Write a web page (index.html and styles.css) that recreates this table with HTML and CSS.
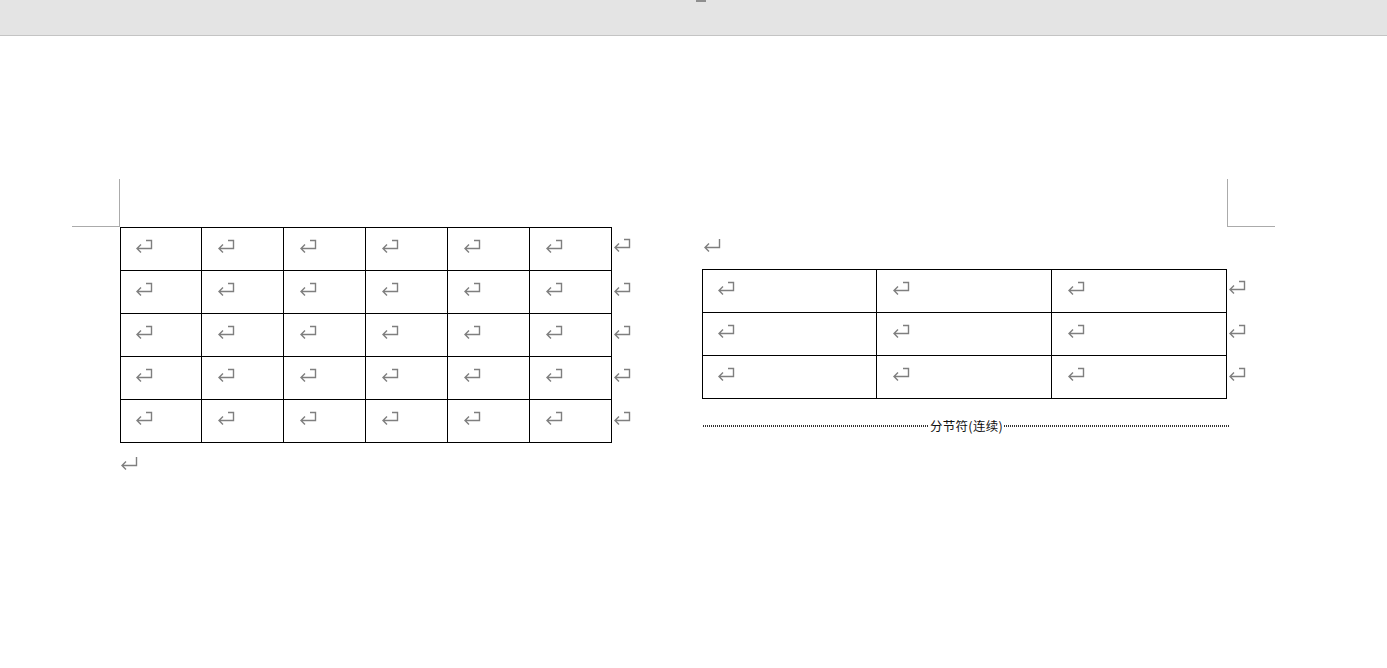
FILE: index.html
```html
<!DOCTYPE html>
<html lang="zh">
<head>
<meta charset="utf-8">
<title>Document</title>
<link rel="stylesheet" href="styles.css">
</head>
<body>
<svg class="defs" width="0" height="0">
  <defs>
    <symbol id="cellmark" viewBox="0 0 18 16">
      <path d="M11 2.5H16.5V10.5H2M6 6.5L2 10.5L6 14.5" fill="none" stroke="#7f7f7f" stroke-width="1.4"/>
    </symbol>
    <symbol id="paramark" viewBox="0 0 18 16">
      <path d="M16.5 2V10.5H2M6 6.5L2 10.5L6 14.5" fill="none" stroke="#7f7f7f" stroke-width="1.4"/>
    </symbol>
  </defs>
</svg>
<div class="topbar"><span class="tick"></span></div>
<div class="main">
  <div class="page page-left">
    <div class="crop crop-left"></div>
    <div class="content content-left">
      <div class="tbl tbl-left">
        <div class="row first">
          <div class="cell"><svg class="m"><use href="#cellmark"/></svg></div>
          <div class="cell"><svg class="m"><use href="#cellmark"/></svg></div>
          <div class="cell"><svg class="m"><use href="#cellmark"/></svg></div>
          <div class="cell"><svg class="m"><use href="#cellmark"/></svg></div>
          <div class="cell"><svg class="m"><use href="#cellmark"/></svg></div>
          <div class="cell"><svg class="m"><use href="#cellmark"/></svg></div>
          <div class="eol"><svg class="m"><use href="#cellmark"/></svg></div>
        </div>
        <div class="row">
          <div class="cell"><svg class="m"><use href="#cellmark"/></svg></div>
          <div class="cell"><svg class="m"><use href="#cellmark"/></svg></div>
          <div class="cell"><svg class="m"><use href="#cellmark"/></svg></div>
          <div class="cell"><svg class="m"><use href="#cellmark"/></svg></div>
          <div class="cell"><svg class="m"><use href="#cellmark"/></svg></div>
          <div class="cell"><svg class="m"><use href="#cellmark"/></svg></div>
          <div class="eol"><svg class="m"><use href="#cellmark"/></svg></div>
        </div>
        <div class="row">
          <div class="cell"><svg class="m"><use href="#cellmark"/></svg></div>
          <div class="cell"><svg class="m"><use href="#cellmark"/></svg></div>
          <div class="cell"><svg class="m"><use href="#cellmark"/></svg></div>
          <div class="cell"><svg class="m"><use href="#cellmark"/></svg></div>
          <div class="cell"><svg class="m"><use href="#cellmark"/></svg></div>
          <div class="cell"><svg class="m"><use href="#cellmark"/></svg></div>
          <div class="eol"><svg class="m"><use href="#cellmark"/></svg></div>
        </div>
        <div class="row">
          <div class="cell"><svg class="m"><use href="#cellmark"/></svg></div>
          <div class="cell"><svg class="m"><use href="#cellmark"/></svg></div>
          <div class="cell"><svg class="m"><use href="#cellmark"/></svg></div>
          <div class="cell"><svg class="m"><use href="#cellmark"/></svg></div>
          <div class="cell"><svg class="m"><use href="#cellmark"/></svg></div>
          <div class="cell"><svg class="m"><use href="#cellmark"/></svg></div>
          <div class="eol"><svg class="m"><use href="#cellmark"/></svg></div>
        </div>
        <div class="row">
          <div class="cell"><svg class="m"><use href="#cellmark"/></svg></div>
          <div class="cell"><svg class="m"><use href="#cellmark"/></svg></div>
          <div class="cell"><svg class="m"><use href="#cellmark"/></svg></div>
          <div class="cell"><svg class="m"><use href="#cellmark"/></svg></div>
          <div class="cell"><svg class="m"><use href="#cellmark"/></svg></div>
          <div class="cell"><svg class="m"><use href="#cellmark"/></svg></div>
          <div class="eol"><svg class="m"><use href="#cellmark"/></svg></div>
        </div>
      </div>
      <div class="para para-after"><svg class="m"><use href="#paramark"/></svg></div>
    </div>
  </div>
  <div class="page page-right">
    <div class="content content-right">
      <div class="para para-before"><svg class="m"><use href="#paramark"/></svg></div>
      <div class="tbl tbl-right">
        <div class="row first">
          <div class="cell"><svg class="m"><use href="#cellmark"/></svg></div>
          <div class="cell"><svg class="m"><use href="#cellmark"/></svg></div>
          <div class="cell"><svg class="m"><use href="#cellmark"/></svg></div>
          <div class="eol"><svg class="m"><use href="#cellmark"/></svg></div>
        </div>
        <div class="row">
          <div class="cell"><svg class="m"><use href="#cellmark"/></svg></div>
          <div class="cell"><svg class="m"><use href="#cellmark"/></svg></div>
          <div class="cell"><svg class="m"><use href="#cellmark"/></svg></div>
          <div class="eol"><svg class="m"><use href="#cellmark"/></svg></div>
        </div>
        <div class="row">
          <div class="cell"><svg class="m"><use href="#cellmark"/></svg></div>
          <div class="cell"><svg class="m"><use href="#cellmark"/></svg></div>
          <div class="cell"><svg class="m"><use href="#cellmark"/></svg></div>
          <div class="eol"><svg class="m"><use href="#cellmark"/></svg></div>
        </div>
      </div>
      <div class="section-break">
        <span class="dots"></span>
        <span class="sb-label">分节符(连续)</span>
        <span class="dots"></span>
      </div>
    </div>
    <div class="crop crop-right"></div>
  </div>
</div>
</body>
</html>
```

FILE: styles.css
```css
* {
  box-sizing: border-box;
}

html, body {
  margin: 0;
  padding: 0;
  width: 1387px;
  height: 668px;
  overflow: hidden;
  background: #ffffff;
  font-family: "Noto Sans CJK SC", "Noto Sans", sans-serif;
}

.defs {
  position: absolute;
  width: 0;
  height: 0;
}

.topbar {
  height: 36px;
  background: #e4e4e4;
  border-bottom: 1px solid #c4c4c4;
  display: flex;
  align-items: flex-start;
}

.tick {
  display: block;
  margin-left: 696px;
  width: 10px;
  height: 2px;
  background: #8e8e8e;
}

.main {
  display: flex;
  padding-top: 143px;
  padding-left: 72px;
}

.page {
  display: flex;
  align-items: flex-start;
}

.page-left {
  width: 630px;
}

.crop {
  width: 48px;
  height: 48px;
  flex: none;
  border-bottom: 1px solid #ababab;
}

.crop-left {
  border-right: 1px solid #ababab;
}

.crop-right {
  border-left: 1px solid #ababab;
}

.content {
  padding-top: 48px;
}

.content-left {
  width: 582px;
}

.content-right {
  width: 525px;
}

.m {
  display: block;
  width: 18px;
  height: 16px;
}

.row {
  display: flex;
  align-items: flex-start;
}

.cell {
  flex: none;
  height: 43px;
  border-right: 1px solid #000;
  border-bottom: 1px solid #000;
  padding: 10px 0 0 15px;
}

.row .cell:first-child {
  border-left: 1px solid #000;
  padding-left: 14px;
}

.row.first .cell {
  border-top: 1px solid #000;
  height: 44px;
}

.row.first .cell,
.row.first .eol {
  padding-top: 10px;
}

.tbl-left .cell {
  width: 82px;
}

.tbl-right .cell {
  width: 175px;
}

.eol {
  margin-left: 1px;
  padding-top: 10px;
}

.para-after {
  margin-top: 12px;
}

.para-before {
  height: 42px;
  padding: 10px 0 0 1px;
}

.section-break {
  display: flex;
  align-items: center;
  width: 526px;
  height: 16px;
  margin-top: 19px;
  margin-left: 1px;
}

.dots {
  flex: 1;
  height: 2px;
  border-top: 1px dotted #333;
  border-bottom: 1px dotted #333;
}

.sb-label {
  font-size: 12.5px;
  line-height: 16px;
  letter-spacing: 0.3px;
  color: #111;
  padding: 0 1px 0 2px;
  white-space: nowrap;
}
```
